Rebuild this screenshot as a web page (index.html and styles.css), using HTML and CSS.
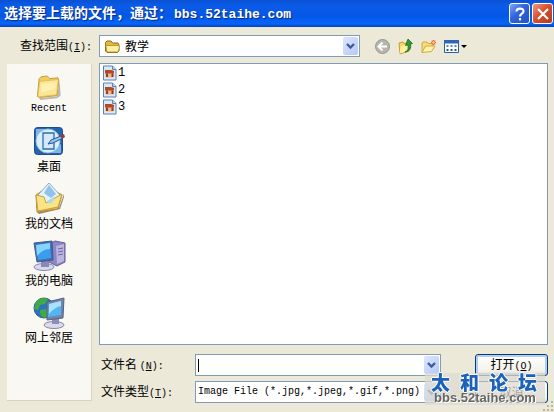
FILE: index.html
```
<!DOCTYPE html>
<html lang="zh-CN">
<head>
    <meta charset="UTF-8">
    <meta name="viewport" content="width=device-width, initial-scale=1.0">
    <title>选择要上载的文件</title>
    <link rel="stylesheet" href="styles.css">
</head>
<body>
    <div class="dialog">
        <header class="titlebar">
            <h1 class="title">选择要上载的文件，通过：<span class="title-host">bbs.52taihe.com</span></h1>
            <button class="caption-btn help" type="button" aria-label="帮助">
                <svg width="18" height="18" viewBox="0 0 18 18" fill="none" stroke="#fff" stroke-width="2.2"><path d="M5.5 6.5C5.5 2.6 12.5 2.6 12.5 6.3C12.5 8.8 9 8.6 9 11.5"/><path d="M9 13v2.4"/></svg>
            </button>
            <button class="caption-btn close" type="button" aria-label="关闭">
                <svg width="18" height="18" viewBox="0 0 18 18" stroke="#fff" stroke-width="2.2"><path d="M4 4l10 10M14 4L4 14"/></svg>
            </button>
        </header>

        <div class="lookup">
            <label class="lookup-label" for="folder">查找范围<span class="en">(<u>I</u>):</span></label>
            <div class="combo">
                <svg class="combo-icon" width="17" height="15" viewBox="0 0 17 15"><path d="M1.5 12V3.5L3 2h4l1.5 2H14l1 2v6l-1.500 1.500H3z" fill="#e6b93c" stroke="#8c6d1f"/><path d="M3 13L1.800 6.500h12.500L15.500 8l-1.500 5z" fill="#fff1a0" stroke="#b08c2c" stroke-width=".8"/></svg>
                <select id="folder" class="field with-icon"><option>教学</option></select>
                <span class="arrow"><svg width="9" height="7" viewBox="0 0 9 7" fill="none" stroke="#3f5c93" stroke-width="2.400"><path d="M1 1l3.500 3.500L8 1"/></svg></span>
            </div>
            <div class="tools">
                <button class="tool" type="button" aria-label="后退">
                    <svg width="17" height="17" viewBox="0 0 17 17"><circle cx="8.500" cy="8.500" r="7" fill="#b7b6ae" stroke="#96958d"/><path d="M13 8.500H5M8.500 4.500l-4 4 4 4" fill="none" stroke="#fff" stroke-width="2"/></svg>
                </button>
                <button class="tool" type="button" aria-label="向上一级">
                    <svg width="17" height="17" viewBox="0 0 17 17"><path d="M2 5l4-1 1 1.500 5-.5v8l-9 3z" fill="#f6d566" stroke="#c79d35"/><path d="M2.500 15.500L4 8l8-2-1 7z" fill="#fff0a0"/><path d="M8 14c3-1 3.500-3.500 3-7l-2.500.5L11 1l4.500 4.500-2 .5c.8 4-.5 7.500-5.500 8z" fill="#2f9a32" stroke="#176b1d" stroke-width=".8"/></svg>
                </button>
                <button class="tool" type="button" aria-label="新建文件夹">
                    <svg width="17" height="17" viewBox="0 0 17 17"><path d="M2 14.500V5l1-1h4l1 1.500h5V8" fill="#f9dc79" stroke="#d5a83c"/><path d="M2 14.500L5.500 8H15l-3.500 5.500z" fill="#fff3b0" stroke="#d5a83c"/><path d="M13.500 2v5M11 4.500h5M11.700 2.700l3.600 3.600M15.300 2.700l-3.600 3.600" stroke="#e56b3a" stroke-width="1.200"/><circle cx="13.500" cy="4.500" r="1.200" fill="#ffd08a"/></svg>
                </button>
                <button class="tool wide" type="button" aria-label="查看菜单">
                    <svg width="24" height="17" viewBox="0 0 24 17"><path d="M1.500 2.500h14v12h-14z" fill="#fff" stroke="#245fa8"/><path d="M1 2h15v3.500H1z" fill="#2d66b5"/><path d="M3.500 7h2v2h-2zM7.500 7h2v2h-2zM11.500 7h2v2h-2z" fill="#5a8ba9"/><path d="M3.500 11h2v2h-2zM7.500 11h2v2h-2zM11.500 11h2v2h-2z" fill="#285a80"/><path d="M18 7h6l-3 3z" fill="#000"/></svg>
                </button>
            </div>
        </div>

        <div class="body">
            <nav class="places">
                <button class="place" type="button">
                    <svg width="34" height="34" viewBox="-2 -5 38 38">
                        <path d="M6 30l20-2 3-17 1 16-4 3-19 2z" fill="#777" opacity=".5"/>
                        <path d="M4 28L6 8l2-2 7-1 3 3 9-1 1 3-2 17-19 2z" fill="#f1cd5a" stroke="#bd9635"/>
                        <path d="M4.500 28.500L6.500 11l21-2-2 17z" fill="#fce691" stroke="#d6ae48" stroke-width=".7"/>
                        <path d="M8 14l17-2-1 7-16 5z" fill="#fff6c4" opacity=".6"/>
                    </svg>
                    <span class="en">Recent</span>
                </button>
                <button class="place" type="button">
                    <svg width="34" height="34" viewBox="0 0 34 34">
                        <rect x="2.500" y="3.500" width="28" height="27" rx="3" fill="#2764ae" stroke="#1d4d91"/>
                        <path d="M4 5h9l-9 9zM29 20v9h-9z" fill="#7db5e6"/>
                        <circle cx="16" cy="17" r="12" fill="#d9eff9" stroke="#8fbde0"/>
                        <path d="M11 9h11v16H11z" fill="#d5e9f8" stroke="#2c6fac" stroke-width="1.300"/>
                        <path d="M16 20l3-4 10-4 2 2-10 5z" fill="#93c4ec" stroke="#24559a"/>
                        <path d="M28 12l4-2 1 3-3 2z" fill="#943f38"/>
                    </svg>
                    <span>桌面</span>
                </button>
                <button class="place" type="button">
                    <svg width="34" height="34" viewBox="0 0 34 34">
                        <path d="M5 31l22-4 5-14v3l-4 12-21 5z" fill="#655b42" opacity=".7"/>
                        <path d="M4 14l12-8 14 8-4 14-21 3z" fill="#e6bd4f" stroke="#b48d36"/>
                        <path d="M6 14L17 2l11 12-7 10H8z" fill="#e4f2fb" stroke="#8fb0c4"/>
                        <path d="M17 4l7 9-5 4-7-5z" fill="#91c3ea"/>
                        <path d="M4 14l8 2 2 6 16-9-4 13-20 4z" fill="#fbe486" stroke="#c9a23d"/>
                        <path d="M15 20l7-4-1 5-4 2z" fill="#a7dced"/>
                    </svg>
                    <span>我的文档</span>
                </button>
                <button class="place" type="button">
                    <svg width="34" height="34" viewBox="0 0 34 34">
                        <path d="M17 6l6-3 10 2v19l-8 4-8-4z" fill="#8c86c2" stroke="#625e9c"/>
                        <path d="M24 8l8-2v17l-7 3z" fill="#bbb5df"/>
                        <path d="M26 11l5-1M26 14l5-1M26 17l5-1" stroke="#6863a7"/>
                        <ellipse cx="12" cy="29" rx="10" ry="3.500" fill="#d9d9ee" stroke="#8888b3"/>
                        <path d="M9 22l8 1v6H9z" fill="#888ab6"/>
                        <path d="M2 5l18-2 1 19-16 2z" fill="#426eb2" stroke="#47578f"/>
                        <path d="M4 7l14-2 1 15-13 2z" fill="#3b9ded"/>
                        <path d="M4 7l14-2v6c-6 0-9 3-13 7z" fill="#85d3ff"/>
                    </svg>
                    <span>我的电脑</span>
                </button>
                <button class="place" type="button">
                    <svg width="34" height="34" viewBox="0 0 34 34">
                        <circle cx="12" cy="13" r="10" fill="#2874bf" stroke="#285d8e"/>
                        <path d="M4 7c3-4 8-5 12-3l-3 5-5 1-2 5-4-1zM8 15l6-1 3 5-4 4c-4 0-5-4-5-8z" fill="#42aa43"/>
                        <ellipse cx="22" cy="30" rx="10" ry="3.500" fill="#dadaea" stroke="#8888a8"/>
                        <path d="M20 23l7-1v7h-7z" fill="#8e8eb8"/>
                        <path d="M15 7l17-4-1 20-16 2z" fill="#7384a6" stroke="#53648c"/>
                        <path d="M17 9l12-3v14l-13 2z" fill="#54b5f5"/>
                        <path d="M17 9l12-3v5c-5 1-9 4-12 8z" fill="#a8e2ff"/>
                    </svg>
                    <span>网上邻居</span>
                </button>
            </nav>

            <div class="main">
                <svg class="symbols" width="0" height="0" aria-hidden="true">
                    <symbol id="image-file" viewBox="0 0 15 16">
                        <path d="M1.500 1h9L14 4.500V15H1.500z" fill="#dbe8f7" stroke="#5b82b5"/>
                        <path d="M10.500 1v3.500H14" fill="#bfd3ea" stroke="#5b82b5"/>
                        <path d="M3.500 5.500h8v7h-8z" fill="#f0b584"/>
                        <path d="M3 5h6l3 1v2.500H3z" fill="#b44a24"/>
                        <path d="M4 8.500h2V12H4zM9.500 8.500h2V12h-2z" fill="#8e3d28"/>
                    </symbol>
                </svg>
                <ul class="files">
                    <li><svg width="15" height="16"><use href="#image-file"/></svg><span class="en">1</span></li>
                    <li><svg width="15" height="16"><use href="#image-file"/></svg><span class="en">2</span></li>
                    <li><svg width="15" height="16"><use href="#image-file"/></svg><span class="en">3</span></li>
                </ul>

                <form class="form">
                    <label for="filename">文件名 <span class="en">(<u>N</u>):</span></label>
                    <div class="combo">
                        <input id="filename" class="field en" type="text" autofocus>
                        <span class="caret"></span>
                        <span class="arrow"><svg width="9" height="7" viewBox="0 0 9 7" fill="none" stroke="#3f5c93" stroke-width="2.400"><path d="M1 1l3.500 3.500L8 1"/></svg></span>
                    </div>
                    <button class="btn primary" type="button">打开<span class="en">(<u>O</u>)</span></button>

                    <label for="filetype">文件类型<span class="en">(<u>T</u>):</span></label>
                    <div class="combo">
                        <select id="filetype" class="field en"><option>Image File (*.jpg,*.jpeg,*.gif,*.png)</option></select>
                        <span class="arrow"><svg width="9" height="7" viewBox="0 0 9 7" fill="none" stroke="#3f5c93" stroke-width="2.400"><path d="M1 1l3.500 3.500L8 1"/></svg></span>
                    </div>
                    <button class="btn" type="button">取消</button>
                </form>
            </div>
        </div>

        <div class="watermark">
            <div class="watermark-name"><span>太</span><span>和</span><span>论</span><span>坛</span></div>
            <div class="watermark-url">bbs.52taihe.com</div>
        </div>
        <svg class="grip" width="12" height="12" viewBox="0 0 12 12" fill="#b8b4a2"><path d="M9 1h2v2H9zM5 5h2v2H5zM9 5h2v2H9zM1 9h2v2H1zM5 9h2v2H5zM9 9h2v2H9z"/></svg>
    </div>
</body>
</html>
```
FILE: styles.css
```
* {
    box-sizing: border-box;
}
body {
    margin: 0;
    background: #ece9d8;
    color: #000;
    font: 12px/16px "Noto Sans CJK SC", sans-serif;
}
button, input, select {
    font: inherit;
    color: inherit;
}
.en {
    font-family: "Liberation Mono", monospace;
    font-size: 10px;
}
.dialog {
    position: relative;
    display: flex;
    flex-direction: column;
    min-height: 100vh;
}

/* title bar */
.titlebar {
    display: flex;
    align-items: center;
    gap: 2px;
    height: 27px;
    padding: 0 1px 0 4px;
    background: linear-gradient(#0b50d2 0%, #0a5be8 20%, #0558e6 60%, #0765fa 88%, #0442b8 100%);
}
.title {
    flex: 1;
    margin: 0;
    color: #fff;
    font-size: 14px;
    line-height: 20px;
    white-space: nowrap;
    text-shadow: 1px 1px 1px #0a2a80;
}
.title-host {
    padding-left: 2px;
    font-family: "Liberation Mono", monospace;
    font-size: 13px;
}
.caption-btn {
    display: grid;
    place-items: center;
    width: 21px;
    height: 21px;
    padding: 0;
    border: 1px solid #fff;
    border-radius: 3px;
}
.help {
    background: linear-gradient(135deg, #7fa5f2, #2f62dc 45%, #2352c4);
}
.close {
    background: linear-gradient(135deg, #ee9a83, #d9502f 45%, #b8371b);
}

/* look-in row */
.lookup {
    display: flex;
    align-items: center;
    padding: 8px 6px 6px 20px;
}
.lookup-label {
    width: 79px;
    white-space: nowrap;
}
.combo {
    position: relative;
    display: flex;
    flex: 1;
    min-width: 0;
}
.field {
    appearance: none;
    width: 100%;
    height: 22px;
    padding: 0 20px 0 2px;
    border: 1px solid #7f9db9;
    border-radius: 0;
    outline: none;
    background: #fff;
}
.with-icon {
    padding-left: 25px;
}
.combo-icon {
    position: absolute;
    top: 4px;
    left: 5px;
}
.arrow {
    position: absolute;
    top: 2px;
    right: 2px;
    display: grid;
    place-items: center;
    width: 15px;
    height: 18px;
    border-radius: 2px;
    background: linear-gradient(135deg, #dce7fe, #b4c8f6);
    pointer-events: none;
}
.tools {
    display: flex;
    gap: 6px;
    width: 188px;
    padding-left: 14px;
}
.tool {
    display: flex;
    width: 17px;
    padding: 0;
    border: 0;
    background: none;
}
.wide {
    width: 24px;
}

/* places bar and file list */
.body {
    display: flex;
    flex: 1;
    gap: 7px;
    padding: 0 6px 9px 7px;
}
.places {
    display: flex;
    flex-direction: column;
    gap: 7px;
    width: 85px;
    margin: 1px 0 2px;
    padding-top: 3px;
    border-right: 1px solid #d8d4c4;
    border-bottom: 1px solid #d8d4c4;
    background: #f9f8f3;
}
.place {
    display: flex;
    flex-direction: column;
    align-items: center;
    padding: 0;
    border: 0;
    background: none;
}
.main {
    display: flex;
    flex: 1;
    flex-direction: column;
    min-width: 0;
}
.symbols {
    position: absolute;
}
.files {
    flex: 1;
    margin: 0;
    padding: 0 2px;
    border: 1px solid #7f9db9;
    background: #fff;
    list-style: none;
}
.files li {
    display: flex;
    align-items: center;
    gap: 1px;
    height: 17px;
}
.files .en {
    font-size: 12px;
}

/* file name and type */
.form {
    display: grid;
    grid-template-columns: 96px 1fr 73px;
    row-gap: 5px;
    align-items: center;
    margin: 0;
    padding-top: 9px;
}
.form label {
    padding-left: 2px;
}
.form .combo {
    margin-right: 34px;
}
.caret {
    position: absolute;
    top: 5px;
    left: 3px;
    width: 1px;
    height: 13px;
    background: #000;
}
#filename {
    caret-color: transparent;
}
.btn {
    height: 22px;
    padding: 0;
    border: 1px solid #003c74;
    border-radius: 3px;
    background: linear-gradient(#fff, #f3f2ea 80%, #dcd8cc);
    line-height: 18px;
}
.primary {
    box-shadow: inset 0 0 0 2px #b5cdf2;
}

/* forum mark over the corner */
.watermark {
    position: absolute;
    right: 9px;
    bottom: 7px;
    width: 120px;
    background: rgba(222, 218, 210, 0.75);
    pointer-events: none;
}
.watermark-name {
    display: flex;
    justify-content: space-between;
    padding: 0 8px 0 6px;
    color: #1c62bb;
    font-size: 19px;
    font-weight: 900;
    line-height: 18px;
    text-shadow: 1px 0 #fff, -1px 0 #fff, 0 1px #fff, 0 -1px #fff;
}
.watermark-url {
    color: #666;
    font: bold 13px/14px "Liberation Sans", sans-serif;
    text-align: center;
    text-shadow: 1px 1px #fff;
}
.grip {
    position: absolute;
    right: 0;
    bottom: 0;
}
```
